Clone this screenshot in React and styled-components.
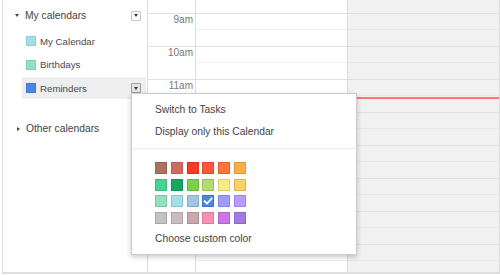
import React from 'react';
import styled, { createGlobalStyle, css } from 'styled-components';

const GlobalStyle = createGlobalStyle`
  html, body {
    margin: 0;
    padding: 0;
    background: #fff;
  }
  body {
    font-family: Arial, "Liberation Sans", sans-serif;
  }
  * {
    box-sizing: border-box;
  }
`;

const palette = [
  ['#ac725e', '#d06b64', '#f83a22', '#fa573c', '#ff7537', '#ffad46'],
  ['#42d692', '#16a765', '#7bd148', '#b3dc6c', '#fbe983', '#fad165'],
  ['#92e1c0', '#9fe1e7', '#9fc6e7', '#4986e7', '#9a9cff', '#b99aff'],
  ['#c2c2c2', '#cabdbf', '#cca6ac', '#f691b2', '#cd74e6', '#a47ae2'],
];

const calendars = [
  { name: 'My Calendar', color: '#9fe1e7' },
  { name: 'Birthdays', color: '#92e1c0' },
  { name: 'Reminders', color: '#4986e7', active: true },
];

const hours = ['9am', '10am', '11am', '12pm', '1pm', '2pm', '3pm', '4pm'];

const Frame = styled.div`
  display: flex;
  width: 498px;
  height: 274px;
  margin-left: 2px;
  border-left: 1px solid #e3e3e3;
  border-right: 1px solid #dcdcdc;
  border-bottom: 2px solid #dedede;
  overflow: hidden;
`;

const Sidebar = styled.div`
  flex: none;
  width: 145px;
  padding: 5px 1px 0 12px;
  border-right: 1px solid #dcdcdc;
`;

const GroupHeader = styled.div`
  display: flex;
  align-items: center;
  height: 21px;
  padding-right: 5px;
  font-size: 10.3px;
  color: #444;
  margin-top: ${p => (p.$spaced ? '19px' : '0')};
`;

const Caret = styled.span`
  width: 0;
  height: 0;
  margin-right: 6px;
  border-style: solid;
  ${p =>
    p.$open
      ? css`
          border-width: 3px 2.5px 0 2.5px;
          border-color: #444 transparent transparent transparent;
        `
      : css`
          margin-left: 2px;
          border-width: 2.5px 0 2.5px 3px;
          border-color: transparent transparent transparent #444;
        `}
`;

const Grow = styled.span`
  flex: 1;
`;

const DropButton = styled.span`
  position: relative;
  display: flex;
  align-items: center;
  justify-content: center;
  width: 10px;
  height: 10px;
  border: 1px solid ${p => (p.$pressed ? '#9a9a9a' : '#c6c6c6')};
  background: ${p => (p.$pressed ? '#e4e4e4' : '#fff')};
  border-radius: 1px;

  &::before {
    content: '';
    width: 0;
    height: 0;
    border-style: solid;
    border-width: 3px 2.5px 0 2.5px;
    border-color: #333 transparent transparent transparent;
  }
`;

const CalendarList = styled.div`
  display: flex;
  flex-direction: column;
  gap: 1.5px;
  margin: 4px 0 0 7px;
`;

const CalendarRow = styled.div`
  display: flex;
  align-items: center;
  height: 22px;
  padding: 0 5px 0 4px;
  font-size: 9.7px;
  color: #4a4a4a;
  background: ${p => (p.$active ? '#eeeeee' : 'transparent')};
`;

const Swatch = styled.span`
  flex: none;
  width: 10px;
  height: 10px;
  margin-right: 4px;
  background: ${p => p.$color};
  border: 1px solid rgba(0, 0, 0, 0.08);
`;

const Menu = styled.div`
  position: absolute;
  top: calc(100% + 1px);
  left: -1px;
  z-index: 10;
  width: 226px;
  height: 162px;
  padding: 4px 0;
  background: #fff;
  border: 1px solid rgba(0, 0, 0, 0.2);
  box-shadow: 0 2px 5px rgba(0, 0, 0, 0.22);
  font-size: 10.3px;
  color: #444;
`;

const MenuItem = styled.div`
  display: flex;
  align-items: center;
  height: 22px;
  padding-left: 23px;
  white-space: nowrap;
  margin-top: ${p => (p.$gap ? '4px' : '0')};
`;

const Separator = styled.div`
  margin: 6px 0 13px;
  border-top: 1px solid #ebebeb;
`;

const Palette = styled.div`
  display: grid;
  grid-template-columns: repeat(6, 12px);
  grid-auto-rows: 12px;
  column-gap: 3.8px;
  row-gap: 4.67px;
  margin-left: 23px;
`;

const ColorCell = styled.span`
  display: flex;
  align-items: center;
  justify-content: center;
  background: ${p => p.$color};
  border: 1px solid rgba(0, 0, 0, 0.13);
`;

const Gutter = styled.div`
  flex: none;
  width: 48px;
  border-right: 1px solid #dedede;
`;

const DayColumn = styled.div`
  position: relative;
  flex: ${p => (p.$fill ? '1' : 'none')};
  width: ${p => (p.$fill ? 'auto' : '152px')};
  background: ${p => (p.$shaded ? '#f1f1f1' : '#fff')};
  border-right: ${p => (p.$fill ? 'none' : '1px solid #dedede')};
`;

const TopCell = styled.div`
  height: 14px;
  border-bottom: 1px solid #e0e0e0;
`;

const HourLabel = styled.div`
  height: 33px;
  padding-right: 2px;
  border-bottom: 1px solid #e0e0e0;
  text-align: right;
  font-size: 10px;
  line-height: 12px;
  color: #777;
`;

const HalfSlot = styled.div`
  height: ${p => (p.$first ? '16px' : '17px')};
  border-bottom: 1px solid
    ${p => (p.$first ? (p.$shaded ? '#e7e7e7' : '#efefef') : p.$shaded ? '#dfdfdf' : '#e0e0e0')};
`;

const NowLine = styled.div`
  position: absolute;
  top: 97px;
  left: 0;
  right: 0;
  height: 2px;
  background: #ff776d;
`;

function Check() {
  return (
    <svg width="10" height="10" viewBox="0 0 10 10">
      <path d="M1.6 5.2 L4 7.5 L8.6 2.6" fill="none" stroke="#fff" strokeWidth="1.8" strokeLinecap="square" />
    </svg>
  );
}

function ColorMenu() {
  return (
    <Menu>
      <MenuItem>Switch to Tasks</MenuItem>
      <MenuItem>Display only this Calendar</MenuItem>
      <Separator />
      <Palette>
        {palette.flat().map(color => (
          <ColorCell key={color} $color={color}>
            {color === '#4986e7' && <Check />}
          </ColorCell>
        ))}
      </Palette>
      <MenuItem $gap>Choose custom color</MenuItem>
    </Menu>
  );
}

function Day({ shaded, fill, children }) {
  return (
    <DayColumn $shaded={shaded} $fill={fill}>
      <TopCell />
      {hours.map(h => (
        <div key={h}>
          <HalfSlot $first $shaded={shaded} />
          <HalfSlot $shaded={shaded} />
        </div>
      ))}
      {children}
    </DayColumn>
  );
}

export default function App() {
  return (
    <>
      <GlobalStyle />
      <Frame>
        <Sidebar>
          <GroupHeader>
            <Caret $open />
            <Grow>My calendars</Grow>
            <DropButton />
          </GroupHeader>
          <CalendarList>
            {calendars.map(({ name, color, active }) => (
              <CalendarRow key={name} $active={active}>
                <Swatch $color={color} />
                <Grow>{name}</Grow>
                {active && (
                  <DropButton $pressed>
                    <ColorMenu />
                  </DropButton>
                )}
              </CalendarRow>
            ))}
          </CalendarList>
          <GroupHeader $spaced>
            <Caret />
            <Grow>Other calendars</Grow>
          </GroupHeader>
        </Sidebar>

        <Gutter>
          <TopCell />
          {hours.map(h => (
            <HourLabel key={h}>{h === '4pm' ? '' : h}</HourLabel>
          ))}
        </Gutter>
        <Day />
        <Day shaded fill>
          <NowLine />
        </Day>
      </Frame>
    </>
  );
}
